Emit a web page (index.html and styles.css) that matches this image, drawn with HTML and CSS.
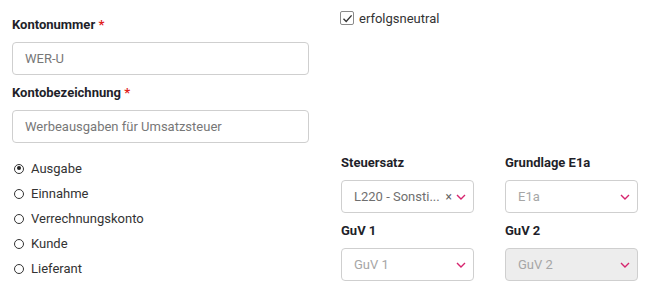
FILE: index.html
```html
<!DOCTYPE html>
<html lang="de">
<head>
<meta charset="utf-8">
<title>Konto</title>
<link rel="stylesheet" href="styles.css">
</head>
<body>
<div class="form">
  <div class="col col-left">
    <div class="field">
      <label class="label">Kontonummer <span class="req">*</span></label>
      <div class="input">WER-U</div>
    </div>
    <div class="field">
      <label class="label">Kontobezeichnung <span class="req">*</span></label>
      <div class="input">Werbeausgaben für Umsatzsteuer</div>
    </div>
  </div>
  <div class="col col-right">
    <div class="check-row">
      <span class="checkbox">
        <svg width="11" height="11" viewBox="0 0 11 11"><path d="M1.5 5.8 L4.2 8.4 L9.6 2.4" fill="none" stroke="#333" stroke-width="1.4"/></svg>
      </span>
      <span class="check-text">erfolgsneutral</span>
    </div>
  </div>
  <div class="col radios">
    <div class="radio-row"><span class="radio checked"></span>Ausgabe</div>
    <div class="radio-row"><span class="radio"></span>Einnahme</div>
    <div class="radio-row"><span class="radio"></span>Verrechnungskonto</div>
    <div class="radio-row"><span class="radio"></span>Kunde</div>
    <div class="radio-row"><span class="radio"></span>Lieferant</div>
  </div>
  <div class="col selects">
    <div class="field">
      <label class="label">Steuersatz</label>
      <div class="select">
        <span class="value">L220 - Sonsti...</span>
        <span class="clear">×</span>
        <svg class="chev" width="10" height="6" viewBox="0 0 10 6"><path d="M1 1 L5 5 L9 1" fill="none" stroke="#d6246e" stroke-width="1.4"/></svg>
      </div>
    </div>
    <div class="field">
      <label class="label">Grundlage E1a</label>
      <div class="select">
        <span class="value placeholder">E1a</span>
        <svg class="chev" width="10" height="6" viewBox="0 0 10 6"><path d="M1 1 L5 5 L9 1" fill="none" stroke="#d6246e" stroke-width="1.4"/></svg>
      </div>
    </div>
    <div class="field">
      <label class="label">GuV 1</label>
      <div class="select">
        <span class="value placeholder">GuV 1</span>
        <svg class="chev" width="10" height="6" viewBox="0 0 10 6"><path d="M1 1 L5 5 L9 1" fill="none" stroke="#d6246e" stroke-width="1.4"/></svg>
      </div>
    </div>
    <div class="field">
      <label class="label">GuV 2</label>
      <div class="select disabled">
        <span class="value placeholder">GuV 2</span>
        <svg class="chev" width="10" height="6" viewBox="0 0 10 6"><path d="M1 1 L5 5 L9 1" fill="none" stroke="#d6246e" stroke-width="1.4"/></svg>
      </div>
    </div>
  </div>
</div>
</body>
</html>
```

FILE: styles.css
```css
* { box-sizing: border-box; }
html, body { margin: 0; padding: 0; background: #fff; }
body {
  font-family: Roboto, "Liberation Sans", sans-serif;
  font-size: 13px;
  color: #333;
}
.form {
  display: grid;
  grid-template-columns: 297px 297px;
  column-gap: 32px;
  padding: 0 8px 0 12px;
}
.col-left { padding-top: 17px; display: flex; flex-direction: column; gap: 10px; }
.col-right { padding-top: 10px; }
.field { display: flex; flex-direction: column; }
.label {
  font-weight: 700;
  font-size: 13px;
  line-height: 16px;
  color: #1f1f2a;
  margin-bottom: 9px;
}
.req { color: #e0201c; }
.input {
  height: 33px;
  border: 1px solid #cfcfcf;
  border-radius: 4px;
  padding: 0 12px;
  display: flex;
  align-items: center;
  color: #777;
}
.check-row { display: flex; align-items: center; height: 16px; }
.checkbox {
  width: 14px; height: 14px;
  border: 1px solid #8a8a8a;
  border-radius: 2px;
  display: flex; align-items: center; justify-content: center;
  margin-left: -1px;
}
.check-text { margin-left: 5px; color: #333; }
.radios {
  grid-column: 1; grid-row: 2;
  margin-top: 13px;
}
.radio-row {
  display: flex; align-items: center;
  height: 25px;
  color: #333;
}
.radio {
  width: 10px; height: 10px;
  border: 1.5px solid #333;
  border-radius: 50%;
  margin: 0 7px 0 2px;
  position: relative;
}
.radio.checked::after {
  content: "";
  position: absolute;
  left: 1.5px; top: 1.5px;
  width: 4px; height: 4px;
  border-radius: 50%;
  background: #222;
}
.selects {
  grid-column: 2; grid-row: 2;
  margin-top: 12px;
  display: grid;
  grid-template-columns: 1fr 1fr;
  column-gap: 31px;
  row-gap: 10px;
}
.select {
  height: 33px;
  border: 1px solid #cfcfcf;
  border-radius: 4px;
  padding: 0 7px 0 12px;
  display: flex;
  align-items: center;
  color: #6f6f6f;
}
.select .value { flex: 1; white-space: nowrap; overflow: hidden; }
.select .placeholder { color: #a6a6a6; }
.select .clear { color: #666; font-size: 12px; margin-right: 4px; }
.select .chev { flex: none; }
.select.disabled { background: #ededed; }
```
